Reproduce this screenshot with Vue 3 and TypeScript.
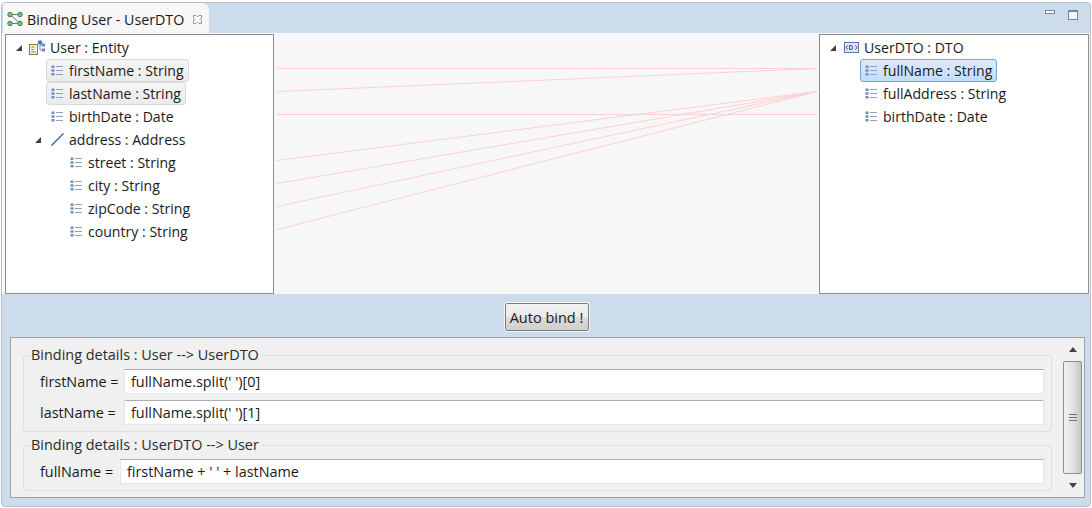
<script setup lang="ts">
interface TreeRow {
  label: string;
  depth: number;
  icon: "entity" | "dto" | "attr" | "ref";
  open?: boolean;
  state?: "hover" | "selected";
}

const leftTree: TreeRow[] = [
  { label: "User : Entity", depth: 0, icon: "entity", open: true },
  { label: "firstName : String", depth: 1, icon: "attr", state: "hover" },
  { label: "lastName : String", depth: 1, icon: "attr", state: "hover" },
  { label: "birthDate : Date", depth: 1, icon: "attr" },
  { label: "address : Address", depth: 1, icon: "ref", open: true },
  { label: "street : String", depth: 2, icon: "attr" },
  { label: "city : String", depth: 2, icon: "attr" },
  { label: "zipCode : String", depth: 2, icon: "attr" },
  { label: "country : String", depth: 2, icon: "attr" },
];

const rightTree: TreeRow[] = [
  { label: "UserDTO : DTO", depth: 0, icon: "dto", open: true },
  { label: "fullName : String", depth: 1, icon: "attr", state: "selected" },
  { label: "fullAddress : String", depth: 1, icon: "attr" },
  { label: "birthDate : Date", depth: 1, icon: "attr" },
];

const links = [
  [68, 68],
  [91, 68],
  [114, 114],
  [160, 91],
  [183, 91],
  [206, 91],
  [229, 91],
];

const groups = [
  {
    title: "Binding details : User --> UserDTO",
    fields: [
      { name: "firstName", value: "fullName.split(' ')[0]" },
      { name: "lastName", value: "fullName.split(' ')[1]" },
    ],
    labelWidth: 84,
  },
  {
    title: "Binding details : UserDTO --> User",
    fields: [{ name: "fullName", value: "firstName + ' ' + lastName" }],
    labelWidth: 80,
  },
];

const trees = [leftTree, rightTree];
</script>

<template>
  <div class="window">
    <div class="tabbar">
      <div class="tab">
        <svg class="tab-icon" width="16" height="16" viewBox="0 0 16 16">
          <path d="M3 3.5 H13 M3 12.5 H13 M3 3.5 L13 12.5" stroke="#5d7f6a" fill="none" />
          <circle cx="3" cy="3.5" r="2.2" fill="#7cc47f" stroke="#3d7a4a" />
          <circle cx="13" cy="3.5" r="2.2" fill="#7cc47f" stroke="#3d7a4a" />
          <circle cx="3" cy="12.5" r="2.2" fill="#7cc47f" stroke="#3d7a4a" />
          <circle cx="13" cy="12.5" r="2.2" fill="#7cc47f" stroke="#3d7a4a" />
        </svg>
        <span class="tab-title">Binding User - UserDTO</span>
        <svg class="tab-close" width="11" height="11" viewBox="0 0 11 11">
          <path d="M1.5 1.5 H4 L5.5 3 L7 1.5 H9.5 V4 L8 5.5 L9.5 7 V9.5 H7 L5.5 8 L4 9.5 H1.5 V7 L3 5.5 L1.5 4 Z" fill="#fff" stroke="#8d9299" />
        </svg>
      </div>
      <div class="win-buttons">
        <span class="btn-min"></span>
        <span class="btn-max"></span>
      </div>
    </div>

    <div class="mapping">
      <template v-for="(tree, i) in trees" :key="i">
        <div class="tree" :class="i === 0 ? 'tree-left' : 'tree-right'">
          <div v-for="row in tree" :key="row.label" class="row" :class="'depth-' + row.depth">
            <span class="twisty"><i v-if="row.open"></i></span>
            <span class="item" :class="row.state">
              <svg v-if="row.icon === 'attr'" class="icon" width="13" height="13" viewBox="0 0 13 13">
                <path d="M0.5 1.5h3v2.5h-3zM0.5 5.2h3v2.5h-3zM0.5 9h3v2.5h-3z" fill="#6f8fc0" />
                <path d="M5 2.5h7M5 6.5h7M5 10.5h7" stroke="#8ea2ba" />
              </svg>
              <svg v-else-if="row.icon === 'ref'" class="icon" width="13" height="13" viewBox="0 0 13 13">
                <path d="M0.5 12.5 L12.5 0.5" stroke="#2f5f9e" stroke-width="1.2" />
              </svg>
              <svg v-else-if="row.icon === 'entity'" class="icon entity-icon" width="16" height="16" viewBox="0 0 16 16">
                <rect x="0.5" y="4.5" width="8" height="10" fill="#f4f1dd" stroke="#8c7c3c" />
                <path d="M2.5 7h3M2.5 9.5h2M2.5 12h3M6.5 11.5v1" stroke="#5e8a6c" />
                <path d="M11 5v5h3M11 5h3" stroke="#6c8db8" fill="none" />
                <circle cx="11" cy="2.5" r="2.3" fill="#3f83c4" />
                <rect x="13" y="3.5" width="3" height="3" fill="#6c8db8" />
                <rect x="13" y="8.5" width="3" height="3" fill="#6c8db8" />
              </svg>
              <svg v-else class="icon dto-icon" width="15" height="13" viewBox="0 0 15 13">
                <rect x="0.5" y="1.5" width="14" height="10" fill="#dfe8f3" stroke="#5478a8" />
                <path d="M3.5 4.5 L2 6.5 L3.5 8.5M11.5 4.5 L13 6.5 L11.5 8.5" stroke="#2f4f7f" fill="none" />
                <path d="M5.5 4.5v4h1.5q1.5 0 1.5-2t-1.5-2z" stroke="#2f4f7f" fill="none" />
              </svg>
              <span class="label">{{ row.label }}</span>
            </span>
          </div>
        </div>
        <svg v-if="i === 0" class="links" viewBox="0 0 540 262" preserveAspectRatio="none">
          <line
            v-for="(l, n) in links"
            :key="n"
            x1="0"
            :y1="l[0] - 33.5"
            x2="540"
            :y2="l[1] - 33.5"
            stroke="#fbd0d0"
          />
        </svg>
      </template>
    </div>

    <div class="actions">
      <button class="auto-bind" type="button">Auto bind !</button>
    </div>

    <div class="details">
      <div class="details-body">
        <fieldset v-for="g in groups" :key="g.title" class="group">
          <legend>{{ g.title }}</legend>
          <div v-for="f in g.fields" :key="f.name" class="field">
            <label :style="{ width: g.labelWidth + 'px' }">{{ f.name }} =</label>
            <div class="input">{{ f.value }}</div>
          </div>
        </fieldset>
      </div>
      <div class="scrollbar">
        <span class="arrow up"></span>
        <div class="thumb"><span></span><span></span><span></span></div>
        <span class="arrow down"></span>
      </div>
    </div>
  </div>
</template>

<style scoped>
.window {
  width: 1090px;
  height: 505px;
  margin: 2px 0 0 1px;
  box-sizing: border-box;
  display: flex;
  flex-direction: column;
  background: #cddcec;
  border: 1px solid #b4c0ce;
  border-radius: 4px;
  font-family: "Open Sans", "Liberation Sans", sans-serif;
  font-size: 14.25px;
  color: #1a1a1a;
  overflow: hidden;
}

.tabbar {
  height: 30px;
  flex: none;
  display: flex;
  justify-content: space-between;
  padding-left: 1px;
}

.tab {
  width: 206px;
  height: 30px;
  box-sizing: border-box;
  background: #f7f7f7;
  border-radius: 0 8px 0 0;
  display: flex;
  align-items: center;
  padding: 2px 0 0 4px;
}

.tab-icon {
  flex: none;
}

.tab-title {
  margin-left: 4px;
  white-space: nowrap;
}

.tab-close {
  margin-left: 8px;
  flex: none;
}

.win-buttons {
  display: flex;
  gap: 13px;
  padding: 7px 12px 0 0;
}

.btn-min {
  width: 8px;
  height: 2px;
  border: 1px solid #7d8590;
  background: #f4f6f8;
}

.btn-max {
  width: 8px;
  height: 7px;
  border: 1px solid #7d8590;
  border-top-width: 2px;
  background: #f4f6f8;
}

.mapping {
  height: 260px;
  flex: none;
  display: flex;
  background: #f7f7f7;
  padding: 1px 2px 0 3px;
}

.tree {
  box-sizing: border-box;
  height: 260px;
  flex: none;
  background: #fff;
  border: 1px solid #8c8c8c;
  padding-top: 1px;
  font-size: 14.1px;
}

.tree-left {
  width: 269px;
}

.tree-right {
  width: 270px;
}

.links {
  flex: none;
  width: 540px;
  height: 262px;
  margin: 0 2px 0 3px;
}

.row {
  height: 23px;
  display: flex;
  align-items: center;
  white-space: nowrap;
}

.depth-1 {
  padding-left: 19px;
}

.depth-2 {
  padding-left: 38px;
}

.twisty {
  width: 16px;
  margin-left: 5px;
  flex: none;
  display: flex;
  align-items: center;
  justify-content: center;
}

.twisty i {
  width: 0;
  height: 0;
  border-left: 6px solid transparent;
  border-bottom: 6px solid #3f3f3f;
}

.item {
  display: inline-flex;
  align-items: center;
  height: 21px;
  padding: 0 4px;
  border: 1px solid transparent;
  border-radius: 3px;
}

.item.hover {
  background: linear-gradient(#f5f5f5, #ebebeb);
  border-color: #d9d9d9;
}

.item.selected {
  background: linear-gradient(#dcebfc, #c2dcfd);
  border-color: #7da2ce;
}

.icon {
  flex: none;
  margin-right: 5px;
}

.entity-icon {
  margin-left: -3px;
}

.dto-icon {
  margin-left: -2px;
}

.actions {
  flex: none;
  height: 43px;
  display: flex;
  align-items: center;
  justify-content: center;
  padding: 3px 0 0 1px;
  box-sizing: border-box;
}

.auto-bind {
  width: 84px;
  height: 28px;
  padding: 0;
  font: inherit;
  font-size: 14.5px;
  color: inherit;
  border: 1px solid #7a7a7a;
  border-radius: 2px;
  outline: 1px solid #f4f6f8;
  background: linear-gradient(#f2f2f2 0, #ebebeb 50%, #dddddd 50%, #cfcfcf 100%);
}

.details {
  flex: none;
  height: 161px;
  margin: 0 5px 0 8px;
  box-sizing: border-box;
  display: flex;
  background: #f0f0f0;
  border: 1px solid #a0a0a0;
  font-size: 14.4px;
}

.details-body {
  flex: 1;
  padding: 8px 11px 0 12px;
  min-width: 0;
}

.group {
  margin: 0 0 4px;
  padding: 4px 7px 6px 16px;
  border: 1px solid #dcdfe3;
  border-radius: 3px;
  min-width: 0;
}

.group legend {
  padding: 0 2px 2px 0;
  margin-left: -9px;
  line-height: 17px;
  font-size: 14.45px;
  color: #2b2b2b;
}

.field {
  display: flex;
  align-items: center;
  height: 25px;
  margin-bottom: 6px;
}

.field:last-child {
  margin-bottom: 0;
}

.field label {
  flex: none;
  white-space: nowrap;
}

.input {
  flex: 1;
  height: 25px;
  box-sizing: border-box;
  background: #fff;
  border: 1px solid #e4e6e9;
  border-top-color: #abadb3;
  padding: 0 6px;
  line-height: 23px;
  white-space: nowrap;
}

.scrollbar {
  flex: none;
  width: 19px;
  margin-right: 2px;
  display: flex;
  flex-direction: column;
  align-items: stretch;
}

.arrow {
  flex: 1;
  display: flex;
  align-items: center;
  justify-content: center;
}

.arrow::before {
  content: "";
  width: 0;
  height: 0;
  border-left: 4px solid transparent;
  border-right: 4px solid transparent;
}

.arrow.up::before {
  border-bottom: 5px solid #444;
}

.arrow.down::before {
  border-top: 5px solid #444;
}

.thumb {
  flex: none;
  height: 113px;
  box-sizing: border-box;
  border: 1px solid #8f8f8f;
  border-radius: 2px;
  background: linear-gradient(90deg, #f1f1f1 0, #e4e4e4 50%, #c6c6c6 100%);
  display: flex;
  flex-direction: column;
  align-items: center;
  justify-content: center;
  gap: 2px;
}

.thumb span {
  width: 8px;
  height: 1px;
  background: #6f6f6f;
}
</style>
